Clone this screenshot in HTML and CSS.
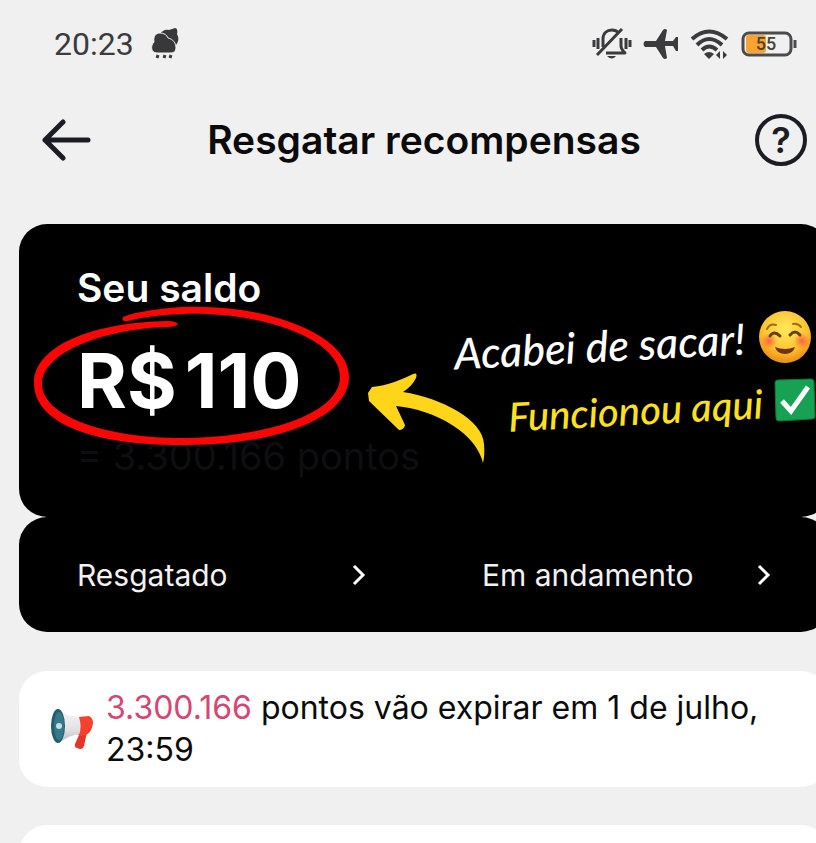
FILE: index.html
```html
<!DOCTYPE html>
<html lang="pt-BR">
<head>
    <meta charset="UTF-8">
    <meta name="viewport" content="width=device-width, initial-scale=1.0">
    <title>Resgatar recompensas</title>
    <link rel="stylesheet" href="styles.css">
</head>
<body>
    <div class="status-bar">
        <span class="time">20:23</span>
        <svg class="weather" width="28" height="32" viewBox="0 0 28 32" fill="#38383b">
            <path d="M9 6C11 3 14 1 18 2L24 0C26 0 27 3 26 6C28 10 28 13 25 17L14 14Z"/>
            <path d="M6 25C0 25 -1 18 3 14C2 8 5 5 9 5C13 5 16 7 17 10C22 11 25 15 25 20C25 23 23 25 20 25Z" stroke="#f0f0f0"/>
            <path d="M7 27l-1 3M14 27l-1 3M20 27l-1 3" stroke="#38383b" stroke-width="3"/>
        </svg>
        <div class="status-icons">
            <svg width="40" height="34" viewBox="0 0 40 34" fill="none" stroke="#3b3b3e" stroke-width="3">
                <path d="M2 13v7M6 11v11M34 11v11M38 13v7"/>
                <path d="M11 20V12C11 6 15 3 20 3C23 3 25 4 27 6M29 11V19C29 22 31 24 33 26H14M5 28L30 2" stroke-linejoin="round"/>
                <path d="M15 29h9q-4 5-9 0Z" fill="#3b3b3e" stroke="none"/>
            </svg>
            <svg width="36" height="32" viewBox="0 0 36 32" fill="#3b3b3e">
                <path d="M2 13H13L20 2Q22 0 24 2L22 13H30L33 9H35V23H33L30 18H22L24 30Q22 32 20 30L13 19H2Q-1 16 2 13Z"/>
            </svg>
            <svg width="40" height="32" viewBox="0 0 40 32" fill="none" stroke="#3b3b3e" stroke-width="4">
                <path d="M2 11Q19-4 37 11M7 17Q19 5 32 17M12 22Q19 15 27 22"/>
                <path d="M14 26Q19 22 24 26L19 31ZM30 23v8l-4-4ZM33 23v8l4-4Z" fill="#3b3b3e" stroke="none"/>
            </svg>
            <svg class="battery" width="56" height="26" viewBox="0 0 56 26">
                <rect x="5" y="4" width="20" height="18" rx="3" fill="#fba32f"/>
                <rect x="2" y="2" width="48" height="22" rx="6" fill="none" stroke="#4b4b4e" stroke-width="3"/>
                <path d="M54 9v8" stroke="#4b4b4e" stroke-width="3"/>
                <text x="25" y="19" text-anchor="middle" fill="#4b4236">55</text>
            </svg>
        </div>
    </div>

    <header class="top-bar">
        <button class="icon-button" aria-label="Voltar">
            <svg width="52" height="42" viewBox="0 0 52 42" fill="none" stroke="#1c1c24" stroke-width="5" stroke-linecap="round" stroke-linejoin="round">
                <path d="M22 3L4 21L22 39M4 21H47"/>
            </svg>
        </button>
        <h1>Resgatar recompensas</h1>
        <button class="icon-button help" aria-label="Ajuda">?</button>
    </header>

    <main>
        <section class="card balance">
            <h2>Seu saldo</h2>
            <p class="amount">R$<span>110</span></p>
            <p class="points">= 3.300.166 pontos</p>

            <!-- hand-drawn circle and arrow -->
            <svg class="marks" width="480" height="260" viewBox="0 0 480 260">
                <path fill="#fa0605" d="M104 93C116 88 136 85 162 83C244 79 330 109 330 153C330 195 255 221 168 221C76 222 15 200 15 159C15 121 76 98 149 97C154 97 157 98 159 100C157 102 154 103 147 103C85 105 23 128 23 160C23 192 87 215 168 214C246 213 321 190 321 153C321 115 243 87 164 90C139 91 119 94 109 97Q102 98 104 93Z"/>
                <path fill="#ffd51a" d="M349 169L353 163C368 162 384 155 394 150Q399 148 397 154C394 160 390 164 384 168C423 174 464 196 465 220Q466 231 464 239C461 226 451 212 433 201C416 190 397 184 377 182L386 201Q385 206 380 206L350 177Z"/>
            </svg>
            <div class="note note-white">Acabei de sacar!</div>
            <div class="note note-yellow">Funcionou aqui</div>
            <svg class="smile" width="52" height="54" viewBox="0 0 52 54">
                <defs>
                    <radialGradient id="face" cx=".5" cy=".35" r=".6">
                        <stop offset="0" stop-color="#ffe95c"/>
                        <stop offset=".7" stop-color="#ffc32e"/>
                        <stop offset="1" stop-color="#ef9518"/>
                    </radialGradient>
                    <radialGradient id="blush">
                        <stop offset="0" stop-color="#fb5843" stop-opacity=".9"/>
                        <stop offset="1" stop-color="#fb5843" stop-opacity="0"/>
                    </radialGradient>
                </defs>
                <circle cx="26" cy="27" r="26" fill="url(#face)"/>
                <circle cx="10" cy="31" r="8" fill="url(#blush)"/>
                <circle cx="43" cy="31" r="8" fill="url(#blush)"/>
                <path d="M8 19Q11 13 17 15M34 14Q39 13 42 17" fill="none" stroke="#9b6c1c" stroke-width="2" stroke-linecap="round"/>
                <path d="M11 26Q15 20 21 26M31 25Q36 19 41 25" fill="none" stroke="#634215" stroke-width="3" stroke-linecap="round"/>
                <path d="M16 37Q26 41 36 37Q34 44 26 44Q18 44 16 37Z" fill="#713018"/>
            </svg>
            <svg class="check" width="42" height="44" viewBox="0 0 42 44">
                <path d="M4 2L37 1Q40 1 40 4L41 38Q41 41 38 41L5 43Q2 43 2 40L1 5Q1 2 4 2Z" fill="#16a153" stroke="#087b3c"/>
                <path d="M8 23L17 33L34 9" fill="none" stroke="#fff" stroke-width="5"/>
            </svg>
        </section>

        <nav class="card links">
            <a href="#">Resgatado
                <svg width="14" height="22" viewBox="0 0 14 22"><path d="M2 2L11 11L2 20"/></svg>
            </a>
            <a href="#">Em andamento
                <svg width="14" height="22" viewBox="0 0 14 22"><path d="M2 2L11 11L2 20"/></svg>
            </a>
        </nav>

        <section class="card notice">
            <svg width="44" height="42" viewBox="0 0 44 42">
                <defs>
                    <linearGradient id="horn" x2="0" y2="1">
                        <stop offset="0" stop-color="#f6f6f7"/>
                        <stop offset=".6" stop-color="#e2e1e4"/>
                        <stop offset="1" stop-color="#b9b8bd"/>
                    </linearGradient>
                </defs>
                <path d="M26 25L37 24L34 38Q33 41 30 41L27 40Q24 39 25 36L29 27Z" fill="#e63528"/>
                <path d="M8 1Q16 8 30 9V26Q19 27 9 35Z" fill="url(#horn)"/>
                <path d="M29 9L39 8Q43 10 43 15Q42 24 36 27L29 28Q32 18 29 9Z" fill="#f5412e"/>
                <ellipse cx="8" cy="18" rx="7" ry="17" fill="#235e70"/>
                <ellipse cx="9" cy="18" rx="5" ry="14" fill="#34788a"/>
                <circle cx="9" cy="18" r="3" fill="#c8dce2"/>
            </svg>
            <p><strong>3.300.166</strong> pontos vão expirar em 1 de julho, 23:59</p>
        </section>

        <section class="card next"></section>
    </main>
</body>
</html>
```
FILE: styles.css
```css
* { box-sizing: border-box; }
body { margin: 0; background: #f0f0f0; color: #0b0b0c; font-family: Inter, sans-serif; overflow-x: hidden; }
h1, h2, p { margin: 0; }
svg { display: block; flex-shrink: 0; }

.status-bar { display: flex; align-items: center; height: 88px; padding: 0 19px 0 54px; }
.time { font: 32px Roboto, sans-serif; color: #3b3b3e; }
.weather { margin-left: 17px; }
.status-icons { display: flex; align-items: center; gap: 11px; margin-left: auto; }
.battery text { font: 500 18px Roboto, sans-serif; }

.top-bar { display: flex; align-items: center; justify-content: space-between; height: 104px; padding: 0 9px 0 41px; }
.top-bar h1 { font-size: 39px; font-weight: 600; line-height: 48px; }
.icon-button { padding: 0; border: 0; background: none; color: #1c1c24; }
.help { width: 52px; height: 52px; border: 4px solid #1c1c24; border-radius: 50%; font: 600 36px Inter, sans-serif; line-height: 44px; }

/* cards run a little past the right edge */
main { margin: 32px -13px 0 19px; }
.card { border-radius: 28px; background: #fff; }

.balance { position: relative; height: 293px; padding: 40px 58px; background: #000; color: #fff; }
.balance h2 { font-size: 39px; font-weight: 600; line-height: 48px; }
.amount { margin-top: 20px; font-size: 76px; font-weight: 700; line-height: 96px; }
.amount span { margin-left: 8px; }
.points { margin-top: 4px; color: #0e0e11; font-size: 38px; line-height: 48px; }

.marks { position: absolute; top: 0; left: 0; }
.note { position: absolute; font-family: Lato, sans-serif; font-style: italic; font-weight: 500; line-height: 48px; white-space: nowrap; transform: rotate(-3deg); }
.note-white { top: 98px; right: 84px; font-size: 43px; }
.note-yellow { top: 162px; right: 66px; font-size: 40px; color: #ffe11c; }
.smile { position: absolute; top: 86px; right: 18px; }
.check { position: absolute; top: 154px; right: 13px; }

.links { display: grid; grid-template-columns: 1fr 1fr; height: 115px; background: #000; }
.links a { display: flex; align-items: center; justify-content: space-between; padding: 0 58px; color: #f2f2f2; font-size: 30px; text-decoration: none; }
.links path { fill: none; stroke: #fff; stroke-width: 3; }

.notice { display: flex; align-items: center; gap: 12px; margin-top: 39px; padding: 16px 50px 16px 31px; }
.notice p { font-size: 32px; line-height: 42px; }
.notice strong { color: #d64672; font-weight: 400; }
.next { height: 28px; margin-top: 38px; border-radius: 28px 28px 0 0; }

/* the next card is cut off by the bottom of the screen */
body { height: 100vh; overflow: hidden; }
```
